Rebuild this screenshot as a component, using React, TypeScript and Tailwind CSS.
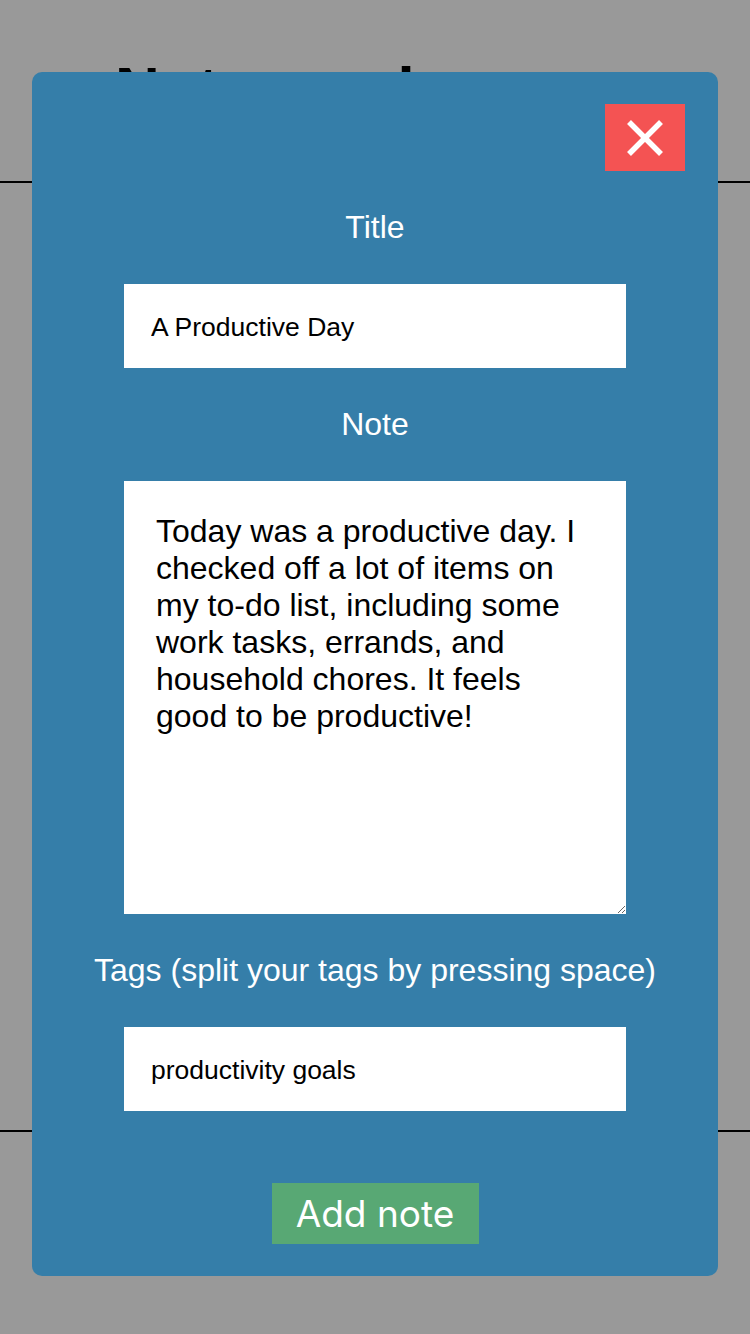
import React from "react";

const labelCls = "mt-[38px] text-[32px] leading-[37px] text-white text-center";

const AddNoteModal = () => {
    return (
        <div className="w-[686px] h-[1204px] bg-[#357ea9] rounded-[10px] flex flex-col items-center">
            {/* Close */}
            <button
                aria-label="Close"
                className="self-end mt-[32px] mr-[33px] w-[80px] h-[67px] bg-[#f45353] flex items-center justify-center"
            >
                <svg width="38" height="38" viewBox="0 0 38 38">
                    <line x1="3" y1="3" x2="35" y2="35" stroke="white" strokeWidth="5.5" />
                    <line x1="35" y1="3" x2="3" y2="35" stroke="white" strokeWidth="5.5" />
                </svg>
            </button>

            <label className={labelCls}>Title</label>
            <input
                defaultValue="A Productive Day"
                className="mt-[38px] w-[502px] h-[84px] bg-white pl-[27px] pt-[2px] text-[26.5px] text-black outline-none"
            />

            <label className={labelCls}>Note</label>
            <textarea
                defaultValue="Today was a productive day. I checked off a lot of items on my to-do list, including some work tasks, errands, and household chores. It feels good to be productive!"
                className="mt-[38px] w-[502px] h-[433px] bg-white px-[32px] pt-[32px] text-[32px] leading-[37px] text-black outline-none"
            />

            <label className={labelCls}>Tags (split your tags by pressing space)</label>
            <input
                defaultValue="productivity goals"
                className="mt-[38px] w-[502px] h-[84px] bg-white pl-[27px] pt-[2px] text-[26.5px] text-black outline-none"
            />

            <button className="mt-[72px] w-[207px] h-[61px] bg-[#58a874] text-white text-[37px] leading-none font-['Inter',sans-serif]">
                Add note
            </button>
        </div>
    );
};

const App: React.FC = () => {
    return (
        <div className="relative h-[1334px] bg-white overflow-hidden font-['Liberation_Sans',Arial,sans-serif]">
            {/* Page behind the modal */}
            <header className="h-[183px] border-b-2 border-black pl-[115px] pt-[58px]">
                <h1 className="text-[62px] leading-none font-bold text-black">Notes and more</h1>
            </header>
            <main className="h-[947px]" />
            <footer className="border-t-2 border-black h-[204px]" />

            {/* Overlay */}
            <div className="absolute inset-0 bg-black/40 flex justify-center pt-[72px]">
                <AddNoteModal />
            </div>
        </div>
    );
};

export default App;
